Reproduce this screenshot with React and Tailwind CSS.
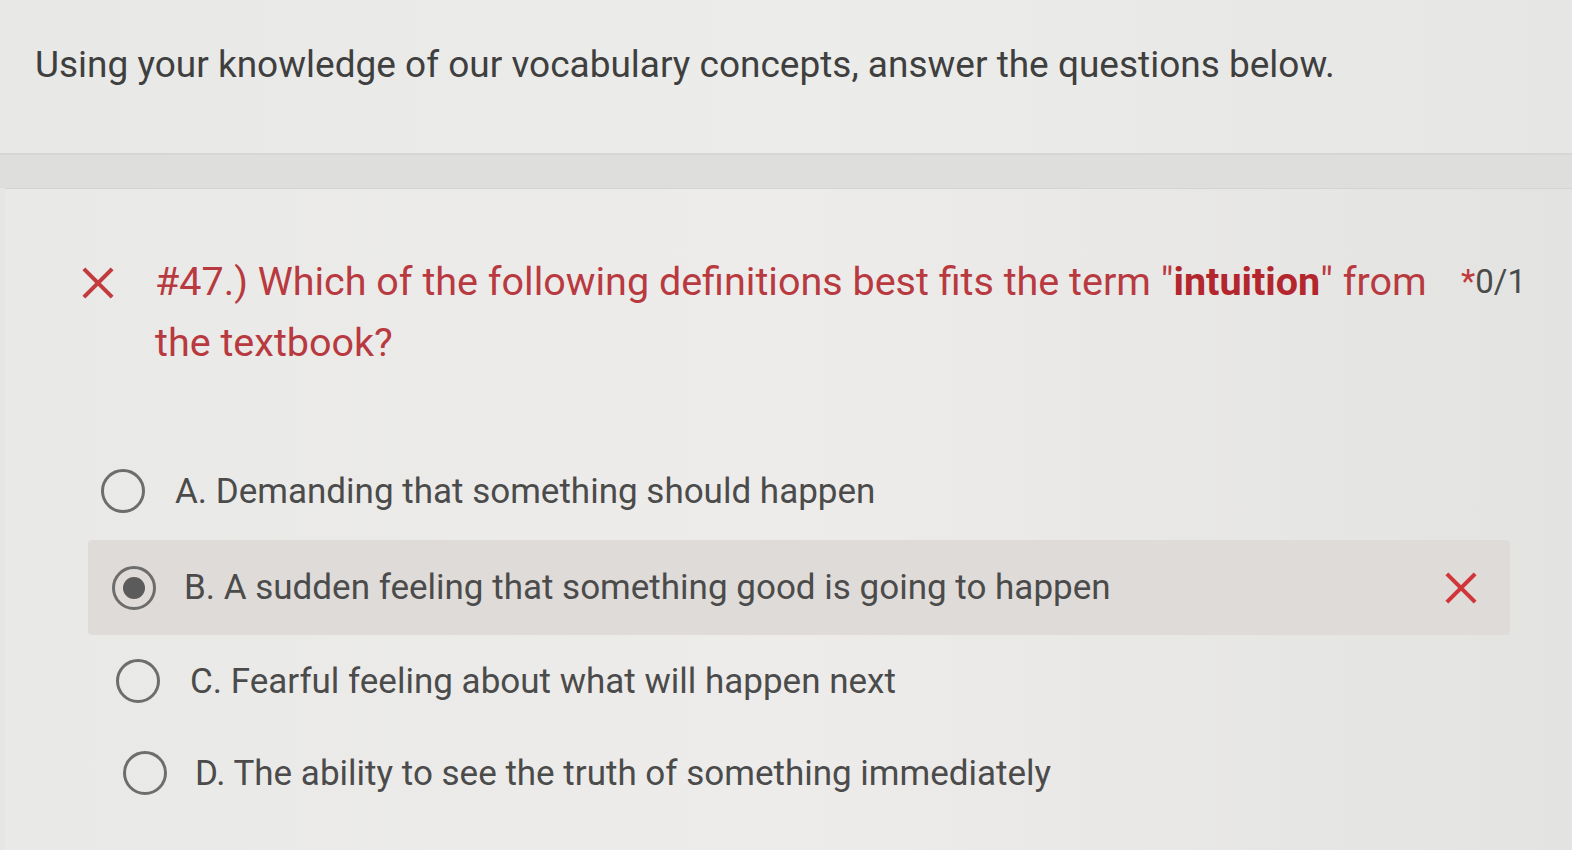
import React from "react";

const options = [
  { label: "A. Demanding that something should happen", pad: "pl-[96px]", gap: "gap-[30px]" },
  { label: "B. A sudden feeling that something good is going to happen", pad: "pl-[107px]", gap: "gap-[28px]", selected: true },
  { label: "C. Fearful feeling about what will happen next", pad: "pl-[111px]", gap: "gap-[30px]" },
  { label: "D. The ability to see the truth of something immediately", pad: "pl-[118px]", gap: "gap-[28px]" },
];

function CrossIcon({ className }) {
  return (
    <svg viewBox="0 0 24 24" className={className} fill="none" stroke="currentColor" strokeWidth="2.6" strokeLinecap="square">
      <path d="M4 4 L20 20 M20 4 L4 20" />
    </svg>
  );
}

function Radio({ selected }) {
  return (
    <div className="flex h-[44px] w-[44px] shrink-0 items-center justify-center rounded-full border-[3px] border-[#6d6d6d]">
      {selected && <div className="h-[22px] w-[22px] rounded-full bg-[#5b5b5b]" />}
    </div>
  );
}

export default function App() {
  return (
    <div className="h-[850px] w-[1572px] overflow-hidden bg-[#e6e6e4] font-['Roboto',sans-serif]">
      <div className="h-[155px] border-b-2 border-[#d6d6d4] bg-gradient-to-r from-[#e8e8e6] via-[#ececea] to-[#e6e6e4] pl-[35px] pt-[41px]">
        <p className="text-[37px] leading-[48px] text-[#3f3f3f]">
          Using your knowledge of our vocabulary concepts, answer the questions below.
        </p>
      </div>

      <div className="h-[33px] bg-[#dededc]" />

      <div className="ml-[5px] h-[662px] border-t border-[#d4d4d2] bg-gradient-to-r from-[#e9e9e7] via-[#edecea] to-[#e3e3e1]">
        <div className="flex items-start pl-[74px] pr-[46px] pt-[62px]">
          <CrossIcon className="mt-[13px] h-[38px] w-[38px] shrink-0 text-[#c23b3f]" />
          <p className="ml-[38px] w-[1290px] shrink-0 text-[39.5px] leading-[61px] text-[#b83a40]">
            #47.) Which of the following definitions best fits the term "<span className="font-bold text-[#b3262d]">intuition</span>" from the textbook?
          </p>
          <p className="ml-auto text-[33px] leading-[61px] text-[#4a4a4a]">
            <span className="text-[#c0393d]">*</span>0/1
          </p>
        </div>

        <div className="mt-[72px] flex flex-col">
          {options.map((o) => (
            <div
              key={o.label}
              className={
                o.selected
                  ? "ml-[83px] mr-[62px] mt-[3px] flex h-[95px] items-center rounded-sm bg-[#dfdbd8] pl-[24px] pr-[30px]"
                  : `flex h-[92px] items-center ${o.pad}`
              }
            >
              <div className={`flex flex-1 items-center ${o.gap}`}>
                <Radio selected={o.selected} />
                <span className="text-[35px] leading-none text-[#4b4b4b]">{o.label}</span>
              </div>
              {o.selected && <CrossIcon className="h-[38px] w-[38px] text-[#d0353a]" />}
            </div>
          ))}
        </div>
      </div>
    </div>
  );
}
